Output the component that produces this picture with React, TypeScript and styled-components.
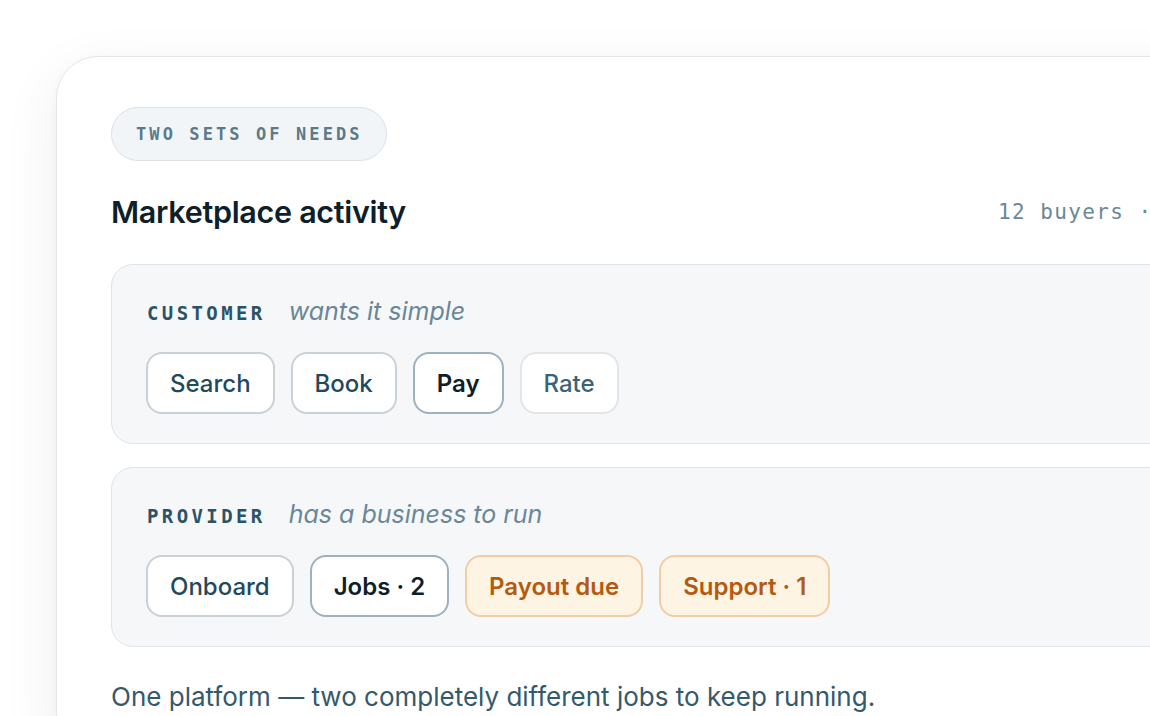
import React from "react";
import styled, { createGlobalStyle, css } from "styled-components";

const GlobalStyle = createGlobalStyle`
  html, body {
    margin: 0;
    padding: 0;
    background: #ffffff;
    overflow: hidden;
  }
  body {
    font-family: Inter, "Noto Sans", sans-serif;
    -webkit-font-smoothing: antialiased;
  }
`;

const MONO = `"DejaVu Sans Mono", "Liberation Mono", monospace`;

const Page = styled.div`
  padding: 56px 0 0 56px;
  height: 716px;
  box-sizing: border-box;
  overflow: hidden;
`;

const Card = styled.section`
  width: 1320px;
  box-sizing: border-box;
  background: #ffffff;
  border: 1.5px solid #e4e7ea;
  border-radius: 42px;
  padding: 50px 54px 40px 54px;
  box-shadow: 0 18px 60px rgba(20, 30, 40, 0.07), 0 2px 10px rgba(20, 30, 40, 0.03);
  display: flex;
  flex-direction: column;
`;

const Badge = styled.div`
  align-self: flex-start;
  height: 54px;
  box-sizing: border-box;
  display: inline-flex;
  align-items: center;
  padding: 0 23px 0 24px;
  border-radius: 999px;
  background: #f2f5f7;
  border: 1.5px solid #dce2e6;
  font-family: ${MONO};
  font-weight: 700;
  font-size: 17px;
  letter-spacing: 3.1px;
  color: #5b7a8a;
`;

const HeaderRow = styled.div`
  margin-top: 33px;
  display: flex;
  align-items: center;
  justify-content: space-between;
`;

const Title = styled.h1`
  margin: 0;
  font-size: 30.5px;
  line-height: 36px;
  font-weight: 600;
  letter-spacing: -0.3px;
  color: #0e1f2b;
`;

const Meta = styled.span`
  font-family: ${MONO};
  font-size: 21px;
  letter-spacing: 1.4px;
  color: #6b8898;
`;

const Panels = styled.div`
  margin-top: 34px;
  display: flex;
  flex-direction: column;
  gap: 23px;
`;

const Panel = styled.div`
  background: #f5f7f9;
  border: 1.5px solid #dfe4e8;
  border-radius: 22px;
  padding: 31px 35px 29px 34px;
  display: flex;
  flex-direction: column;
  gap: 26px;
`;

const LabelRow = styled.div`
  display: flex;
  align-items: baseline;
  gap: 23px;
  height: 30px;
  line-height: 30px;
`;

const Role = styled.span`
  font-family: ${MONO};
  font-weight: 700;
  font-size: 19px;
  letter-spacing: 3.4px;
  color: #2b5367;
  padding-left: 1px;
`;

const Mood = styled.span`
  font-style: italic;
  font-size: 25px;
  color: #6a8798;
`;

const Chips = styled.div`
  display: flex;
  gap: 16px;
`;

type Tone = "plain" | "active" | "muted" | "warn";

const toneStyles: Record<Tone, ReturnType<typeof css>> = {
  plain: css`
    background: #ffffff;
    border-color: #c9d1d7;
    color: #1f4a5e;
    font-weight: 500;
  `,
  active: css`
    background: #ffffff;
    border-color: #9db2be;
    color: #0e1f2b;
    font-weight: 600;
  `,
  muted: css`
    background: #ffffff;
    border-color: #e2e6e9;
    color: #3a6378;
    font-weight: 500;
  `,
  warn: css`
    background: #fef4e4;
    border-color: #f1cda6;
    color: #b45a10;
    font-weight: 600;
  `,
};

const Chip = styled.span<{ $tone: Tone }>`
  height: 62px;
  box-sizing: border-box;
  display: inline-flex;
  align-items: center;
  padding: 0 22px;
  border: 2px solid;
  border-radius: 16px;
  font-size: 24px;
  ${({ $tone }) => toneStyles[$tone]}
`;

const Note = styled.p`
  margin: 33px 0 0;
  font-size: 26px;
  line-height: 34px;
  color: #35596c;
`;

type Group = {
  role: string;
  mood: string;
  chips: { label: string; tone: Tone }[];
};

const groups: Group[] = [
  {
    role: "CUSTOMER",
    mood: "wants it simple",
    chips: [
      { label: "Search", tone: "plain" },
      { label: "Book", tone: "plain" },
      { label: "Pay", tone: "active" },
      { label: "Rate", tone: "muted" },
    ],
  },
  {
    role: "PROVIDER",
    mood: "has a business to run",
    chips: [
      { label: "Onboard", tone: "plain" },
      { label: "Jobs · 2", tone: "active" },
      { label: "Payout due", tone: "warn" },
      { label: "Support · 1", tone: "warn" },
    ],
  },
];

export default function App() {
  return (
    <>
      <GlobalStyle />
      <Page>
        <Card>
          <Badge>TWO SETS OF NEEDS</Badge>
          <HeaderRow>
            <Title>Marketplace activity</Title>
            <Meta>12 buyers · 7 providers</Meta>
          </HeaderRow>
          <Panels>
            {groups.map((g) => (
              <Panel key={g.role}>
                <LabelRow>
                  <Role>{g.role}</Role>
                  <Mood>{g.mood}</Mood>
                </LabelRow>
                <Chips>
                  {g.chips.map((c) => (
                    <Chip key={c.label} $tone={c.tone}>
                      {c.label}
                    </Chip>
                  ))}
                </Chips>
              </Panel>
            ))}
          </Panels>
          <Note>One platform — two completely different jobs to keep running.</Note>
        </Card>
      </Page>
    </>
  );
}
